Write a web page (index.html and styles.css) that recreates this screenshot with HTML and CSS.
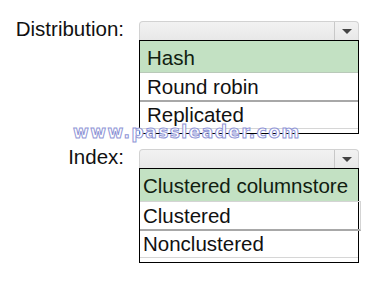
FILE: index.html
```html
<!DOCTYPE html>
<html lang="en">
<head>
  <meta charset="UTF-8">
  <meta name="viewport" content="width=device-width, initial-scale=1.0">
  <title>Distribution and Index</title>
  <link rel="stylesheet" href="styles.css">
</head>
<body>

  <div class="form">
    <div class="field">
      <label class="field-label">Distribution:</label>
      <div class="control">
        <div class="select"><span class="select-arrow"></span></div>
        <ul class="listbox listbox-dist">
          <li class="option option-first selected">Hash</li>
          <li class="option option-second">Round robin</li>
          <li class="option option-third">Replicated</li>
        </ul>
      </div>
    </div>

    <div class="field">
      <label class="field-label">Index:</label>
      <div class="control">
        <div class="select"><span class="select-arrow"></span></div>
        <ul class="listbox listbox-index">
          <li class="option option-first selected">Clustered columnstore</li>
          <li class="option option-second outlined">Clustered</li>
          <li class="option option-third">Nonclustered</li>
        </ul>
      </div>
    </div>
  </div>

  <div class="watermark">www.passleader.com</div>

</body>
</html>
```

FILE: styles.css
```css
body {
  margin: 0;
  font-family: 'Liberation Sans', Arial, sans-serif;
  background-color: #fff;
  color: #111;
}

.form {
  display: flex;
  flex-direction: column;
  gap: 15px;
  padding-top: 21px;
}

.field {
  display: grid;
  grid-template-columns: 124px 220px;
  column-gap: 15px;
  align-items: start;
}

.field-label {
  text-align: right;
  font-size: 20.5px;
  line-height: 16px;
  white-space: nowrap;
}

.select {
  height: 19px;
  box-sizing: border-box;
  display: flex;
  justify-content: flex-end;
  border: 1px solid #d2d2d2;
  border-bottom: none;
  border-radius: 4px 4px 0 0;
  background: linear-gradient(#f2f2f2, #e8e8e8);
}

.select-arrow {
  width: 23px;
  display: flex;
  align-items: center;
  justify-content: center;
  border-left: 1px solid #c8c8c8;
}

.select-arrow::after {
  content: "";
  border-left: 5px solid transparent;
  border-right: 5px solid transparent;
  border-top: 5px solid #444;
}

.listbox {
  list-style: none;
  margin: 0;
  padding: 0 0 4px;
  border: 1px solid #000;
}

.option {
  font-size: 20.5px;
  white-space: nowrap;
}

.listbox-dist .option {
  padding-left: 7px;
}

.listbox-index .option {
  padding-left: 3px;
}

.option-first {
  height: 31px;
  line-height: 31px;
  padding-top: 1px;
}

.listbox-dist .option-first {
  height: 30px;
  border-bottom: 1px solid #b9c9b9;
}

.option-second {
  height: 27px;
  line-height: 27px;
  border-bottom: 2px solid #a8a8a8;
}

.option-third {
  height: 26px;
  line-height: 26px;
  border-bottom: 1px solid #d6d6d6;
}

.selected {
  background-color: #c3e1c3;
  color: #102010;
}

.outlined {
  margin-right: -3px;
  border-top: 1px solid #d4d4d4;
  border-right: 1px solid #d4d4d4;
}

.watermark {
  position: absolute;
  left: 73px;
  top: 125px;
  font-family: 'DejaVu Sans', sans-serif;
  font-weight: bold;
  font-size: 17px;
  line-height: 14px;
  letter-spacing: 1.5px;
  color: #fff;
  -webkit-text-stroke: 1px #8f95d6;
}
```
